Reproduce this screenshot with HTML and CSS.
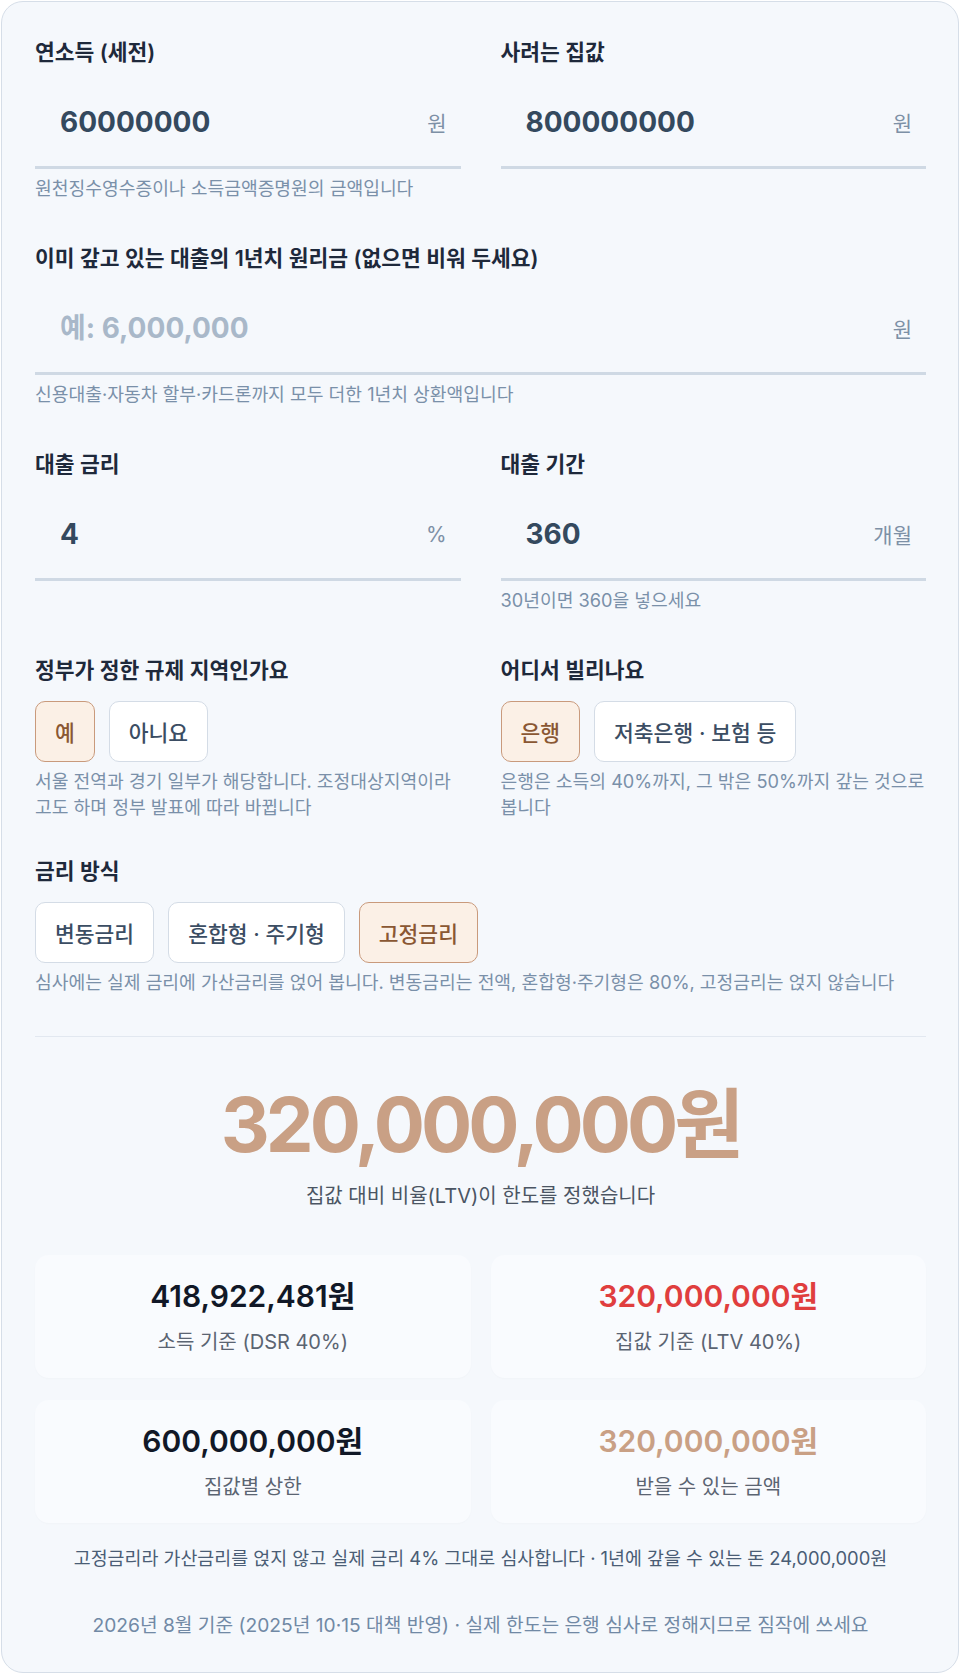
FILE: index.html
```html
<!DOCTYPE html>
<html lang="ko">
<head>
<meta charset="utf-8">
<title>주택담보대출 한도 계산기</title>
<link rel="stylesheet" href="styles.css">
</head>
<body>
<main class="card">
  <section class="row">
    <div class="field">
      <div class="label">연소득 (세전)</div>
      <label class="input"><input type="text" value="60000000"><span class="unit">원</span></label>
      <p class="help">원천징수영수증이나 소득금액증명원의 금액입니다</p>
    </div>
    <div class="field">
      <div class="label">사려는 집값</div>
      <label class="input"><input type="text" value="800000000"><span class="unit">원</span></label>
    </div>
  </section>

  <section class="row single">
    <div class="field">
      <div class="label">이미 갚고 있는 대출의 1년치 원리금 (없으면 비워 두세요)</div>
      <label class="input"><input type="text" placeholder="예: 6,000,000"><span class="unit">원</span></label>
      <p class="help">신용대출·자동차 할부·카드론까지 모두 더한 1년치 상환액입니다</p>
    </div>
  </section>

  <section class="row">
    <div class="field">
      <div class="label">대출 금리</div>
      <label class="input"><input type="text" value="4"><span class="unit">%</span></label>
    </div>
    <div class="field">
      <div class="label">대출 기간</div>
      <label class="input"><input type="text" value="360"><span class="unit">개월</span></label>
      <p class="help">30년이면 360을 넣으세요</p>
    </div>
  </section>

  <section class="row">
    <div class="field">
      <div class="label">정부가 정한 규제 지역인가요</div>
      <div class="choices">
        <button class="choice on">예</button>
        <button class="choice">아니요</button>
      </div>
      <p class="help">서울 전역과 경기 일부가 해당합니다. 조정대상지역이라고도 하며 정부 발표에 따라 바뀝니다</p>
    </div>
    <div class="field">
      <div class="label">어디서 빌리나요</div>
      <div class="choices">
        <button class="choice on">은행</button>
        <button class="choice">저축은행 · 보험 등</button>
      </div>
      <p class="help">은행은 소득의 40%까지, 그 밖은 50%까지 갚는 것으로 봅니다</p>
    </div>
  </section>

  <section class="row single tight">
    <div class="field">
      <div class="label">금리 방식</div>
      <div class="choices">
        <button class="choice">변동금리</button>
        <button class="choice">혼합형 · 주기형</button>
        <button class="choice on">고정금리</button>
      </div>
      <p class="help">심사에는 실제 금리에 가산금리를 얹어 봅니다. 변동금리는 전액, 혼합형·주기형은 80%, 고정금리는 얹지 않습니다</p>
    </div>
  </section>

  <hr class="divider">

  <section class="result">
    <div class="big">320,000,000원</div>
    <p class="sub">집값 대비 비율(LTV)이 한도를 정했습니다</p>
  </section>

  <section class="stats">
    <div class="stat">
      <div class="stat-value">418,922,481원</div>
      <div class="stat-label">소득 기준 (DSR 40%)</div>
    </div>
    <div class="stat">
      <div class="stat-value red">320,000,000원</div>
      <div class="stat-label">집값 기준 (LTV 40%)</div>
    </div>
    <div class="stat">
      <div class="stat-value">600,000,000원</div>
      <div class="stat-label">집값별 상한</div>
    </div>
    <div class="stat">
      <div class="stat-value tan">320,000,000원</div>
      <div class="stat-label">받을 수 있는 금액</div>
    </div>
  </section>

  <p class="note">고정금리라 가산금리를 얹지 않고 실제 금리 4% 그대로 심사합니다 · 1년에 갚을 수 있는 돈 24,000,000원</p>
  <p class="foot">2026년 8월 기준 (2025년 10·15 대책 반영) · 실제 한도는 은행 심사로 정해지므로 짐작에 쓰세요</p>
</main>
</body>
</html>
```

FILE: styles.css
```css
* { box-sizing: border-box; }

body {
  margin: 0;
  background: #ffffff;
  font-family: Inter, "Noto Sans CJK KR", sans-serif;
  color: #1e293b;
}

p { margin: 0; }

.card {
  margin: 1px;
  border: 1px solid #d6dee8;
  border-radius: 22px;
  background: #f5f8fc;
  padding: 36px 32px 34px 33px;
}

.row {
  display: grid;
  grid-template-columns: minmax(0, 1fr) minmax(0, 1fr);
  column-gap: 40px;
  align-items: start;
}

.row.single { grid-template-columns: minmax(0, 1fr); }

.row + .row { margin-top: 43px; }
.row + .row.tight { margin-top: 37px; }

.label {
  font-size: 21.5px;
  line-height: 28px;
  font-weight: 600;
  color: #1e293b;
}

.input {
  margin-top: 12px;
  height: 91px;
  display: flex;
  align-items: center;
  padding: 0 14px 0 25px;
  border-bottom: 3px solid #cfd9e4;
}

.input input {
  flex: 1;
  width: 0;
  min-width: 0;
  border: 0;
  padding: 0;
  background: transparent;
  outline: none;
  font-family: Inter, "Noto Sans CJK KR", sans-serif;
  font-size: 28px;
  line-height: 36px;
  font-weight: 700;
  color: #34495e;
}

.input input::placeholder { color: #a9b8c9; }

.unit {
  font-size: 21px;
  color: #7d90a6;
}

.help {
  margin-top: 6px;
  font-size: 18.2px;
  line-height: 26px;
  color: #7a90a9;
}

.choices {
  margin-top: 17px;
  display: flex;
  gap: 14px;
}

.choice {
  height: 61px;
  padding: 0 19px;
  border: 1px solid #d4dce6;
  border-radius: 10px;
  background: #ffffff;
  font-family: Inter, "Noto Sans CJK KR", sans-serif;
  font-size: 21.5px;
  font-weight: 500;
  color: #3b4d63;
}

.choice.on {
  background: #fbf0e6;
  border-color: #c99a7c;
  color: #8a5733;
}

.divider {
  margin: 41px 0 0;
  border: 0;
  height: 1px;
  background: #e2e8f0;
}

.result {
  margin-top: 41px;
  text-align: center;
}

.big {
  font-size: 76px;
  line-height: 92px;
  font-weight: 700;
  letter-spacing: -4px;
  color: #c9a085;
}

.sub {
  margin-top: 13px;
  font-size: 20px;
  line-height: 26px;
  color: #4b5563;
}

.stats {
  margin-top: 46px;
  display: grid;
  grid-template-columns: minmax(0, 1fr) minmax(0, 1fr);
  gap: 22px 20px;
}

.stat {
  background: #f9fbfe;
  border-radius: 14px;
  padding: 23px 16px 22px;
  text-align: center;
  box-shadow: 0 1px 2px rgba(15, 23, 42, 0.02);
}

.stat-value {
  font-size: 30px;
  line-height: 36px;
  font-weight: 600;
  color: #111827;
}

.stat-value.red { color: #e03e3e; }
.stat-value.tan { color: #c9a085; }

.stat-label {
  margin-top: 14px;
  font-size: 20px;
  line-height: 28px;
  color: #5b6472;
}

.note {
  margin-top: 22px;
  text-align: center;
  font-size: 18.4px;
  line-height: 26px;
  color: #4a5d75;
}

.foot {
  margin-top: 41px;
  text-align: center;
  font-size: 19.2px;
  line-height: 26px;
  color: #7189a5;
}
```
